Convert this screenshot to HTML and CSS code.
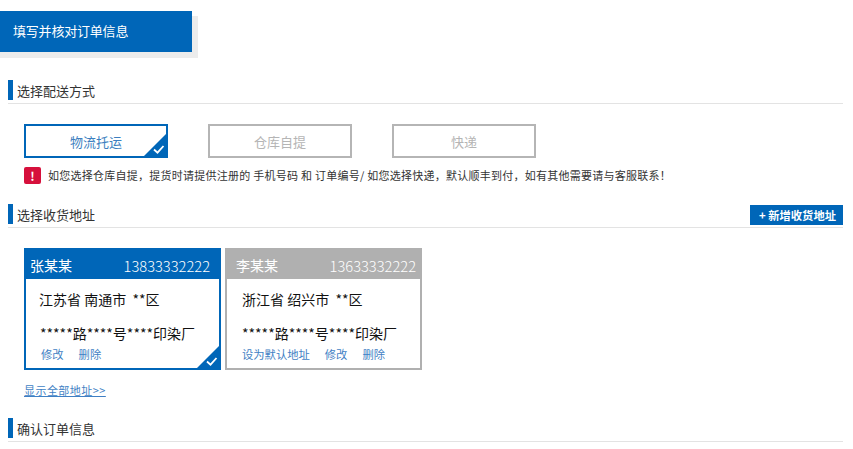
FILE: index.html
```html
<!DOCTYPE html>
<html lang="zh">
<head>
<meta charset="utf-8">
<title>填写并核对订单信息</title>
<link rel="stylesheet" href="styles.css">
</head>
<body>
<div class="banner-wrap"><h1 class="banner">填写并核对订单信息</h1></div>

<section class="section s-ship">
  <div class="sec-head"><h2 class="sec-title">选择配送方式</h2></div>
  <div class="tabs">
    <div class="tab active">物流托运
      <svg class="tick" viewBox="0 0 24 24"><path d="M24 0V24H0Z" fill="#0066b8"/><path d="M11 16.5l3.5 3.2L20.5 13" fill="none" stroke="#fff" stroke-width="1.8"/></svg>
    </div>
    <div class="tab">仓库自提</div>
    <div class="tab">快递</div>
  </div>
  <div class="notice">
    <span class="notice-icon">!</span>
    <span class="notice-text">如您选择仓库自提，提货时请提供注册的 手机号码 和 订单编号/ 如您选择快递，默认顺丰到付，如有其他需要请与客服联系！</span>
  </div>
</section>

<section class="section s-addr">
  <div class="sec-head"><h2 class="sec-title">选择收货地址</h2><a class="add-btn">+ 新增收货地址</a></div>
  <div class="cards">
    <div class="card active">
      <div class="card-head"><span>张某某</span><span class="phone">13833332222</span></div>
      <div class="card-body">
        <p class="line-a">江苏省 南通市&nbsp; **区</p>
        <p class="line-b">*****路****号****印染厂</p>
        <div class="links"><a>修改</a><a>删除</a></div>
      </div>
      <svg class="tick" viewBox="0 0 24 24"><path d="M24 0V24H0Z" fill="#0066b8"/><path d="M11 16.5l3.5 3.2L20.5 13" fill="none" stroke="#fff" stroke-width="1.8"/></svg>
    </div>
    <div class="card">
      <div class="card-head"><span>李某某</span><span class="phone">13633332222</span></div>
      <div class="card-body">
        <p class="line-a">浙江省 绍兴市&nbsp; **区</p>
        <p class="line-b">*****路****号****印染厂</p>
        <div class="links"><a>设为默认地址</a><a>修改</a><a>删除</a></div>
      </div>
    </div>
  </div>
  <a class="show-all">显示全部地址&gt;&gt;</a>
</section>

<section class="section s-confirm">
  <div class="sec-head"><h2 class="sec-title">确认订单信息</h2></div>
</section>
</body>
</html>
```

FILE: styles.css
```css
* { box-sizing: border-box; }
html, body { margin: 0; padding: 0; }
body {
  height: 449px;
  overflow: hidden;
  background: #fff;
  color: #333;
  font-family: "Noto Sans CJK SC", "Liberation Sans", sans-serif;
}
h1, h2, p { margin: 0; font-weight: 400; }

.banner-wrap {
  width: 198px;
  height: 47px;
  margin-top: 11px;
  background: linear-gradient(#fff 5px, #ececec 5px);
}
.banner {
  width: 192px;
  height: 41px;
  margin: 0;
  padding-left: 13px;
  background: #0066b8;
  color: #fff;
  font-size: 13px;
  letter-spacing: -0.2px;
  line-height: 40px;
}

.section { margin-left: 8px; width: 835px; }
.s-ship { margin-top: 22px; }
.s-addr { margin-top: 20px; }
.s-confirm { margin-top: 20px; }

.sec-head {
  display: flex;
  justify-content: space-between;
  align-items: flex-start;
  height: 24px;
  border-bottom: 1px solid #e3e3e3;
}
.sec-title {
  height: 20px;
  padding-left: 4px;
  border-left: 5px solid #0066b8;
  font-size: 13px;
  line-height: 22px;
  color: #333;
}
.add-btn {
  width: 93px;
  height: 20px;
  margin-top: 1px;
  padding-left: 2px;
  background: #0066b8;
  color: #fff;
  font-size: 11.3px;
  font-weight: 700;
  line-height: 20px;
  text-align: center;
}

.tabs { display: flex; gap: 40px; margin: 20px 0 0 16px; }
.tab {
  position: relative;
  width: 144px;
  height: 34px;
  border: 2px solid #b5b5b5;
  color: #b5b5b5;
  font-size: 13px;
  line-height: 32px;
  text-align: center;
}
.tab.active { border-color: #0066b8; color: #3d7fc0; }
.tick { position: absolute; right: -1px; bottom: -1px; width: 24px; height: 24px; }

.notice { display: flex; align-items: center; height: 17px; margin: 9px 0 0 16px; }
.notice-icon {
  width: 17px;
  height: 17px;
  margin-right: 7px;
  border-radius: 2px;
  background: #d6103c;
  color: #fff;
  font-size: 12px;
  font-weight: 700;
  line-height: 17px;
  text-align: center;
}
.notice-text { font-size: 11px; letter-spacing: 0.25px; line-height: 17px; white-space: nowrap; }

.cards { display: flex; gap: 4px; margin: 20px 0 0 16px; }
.card {
  position: relative;
  width: 197px;
  height: 122px;
  border: 2px solid #b0b0b0;
}
.card.active { border-color: #0066b8; }
.card-head {
  display: flex;
  justify-content: space-between;
  height: 30px;
  margin: -1px -1px 0;
  padding: 0 5px 0 10px;
  background: #b0b0b0;
  color: #fff;
  font-size: 14px;
  line-height: 33px;
}
.card.active .card-head { background: #0066b8; padding: 0 10px 0 5px; }
.phone { font-size: 14.7px; font-weight: 300; }
.card-body { padding: 0 0 0 15px; color: #111; }
.card.active .card-body { padding-left: 14px; }
.line-a { margin-top: 8px; font-size: 14px; line-height: 24px; }
.card.active .line-a { margin-left: -1px; }
.line-b { margin-top: 12px; font-size: 14px; line-height: 20px; }
.links { display: flex; gap: 15px; margin-top: 3px; font-size: 11.3px; line-height: 16px; color: #3f7fc4; }
.card.active .links a:first-child { margin-left: 1px; }

.show-all {
  display: block;
  width: 82px;
  margin: 12px 0 0 16px;
  color: #3f7fc4;
  font-size: 11px;
  line-height: 16px;
  letter-spacing: 0.45px;
  text-decoration: underline;
  white-space: nowrap;
}
```
